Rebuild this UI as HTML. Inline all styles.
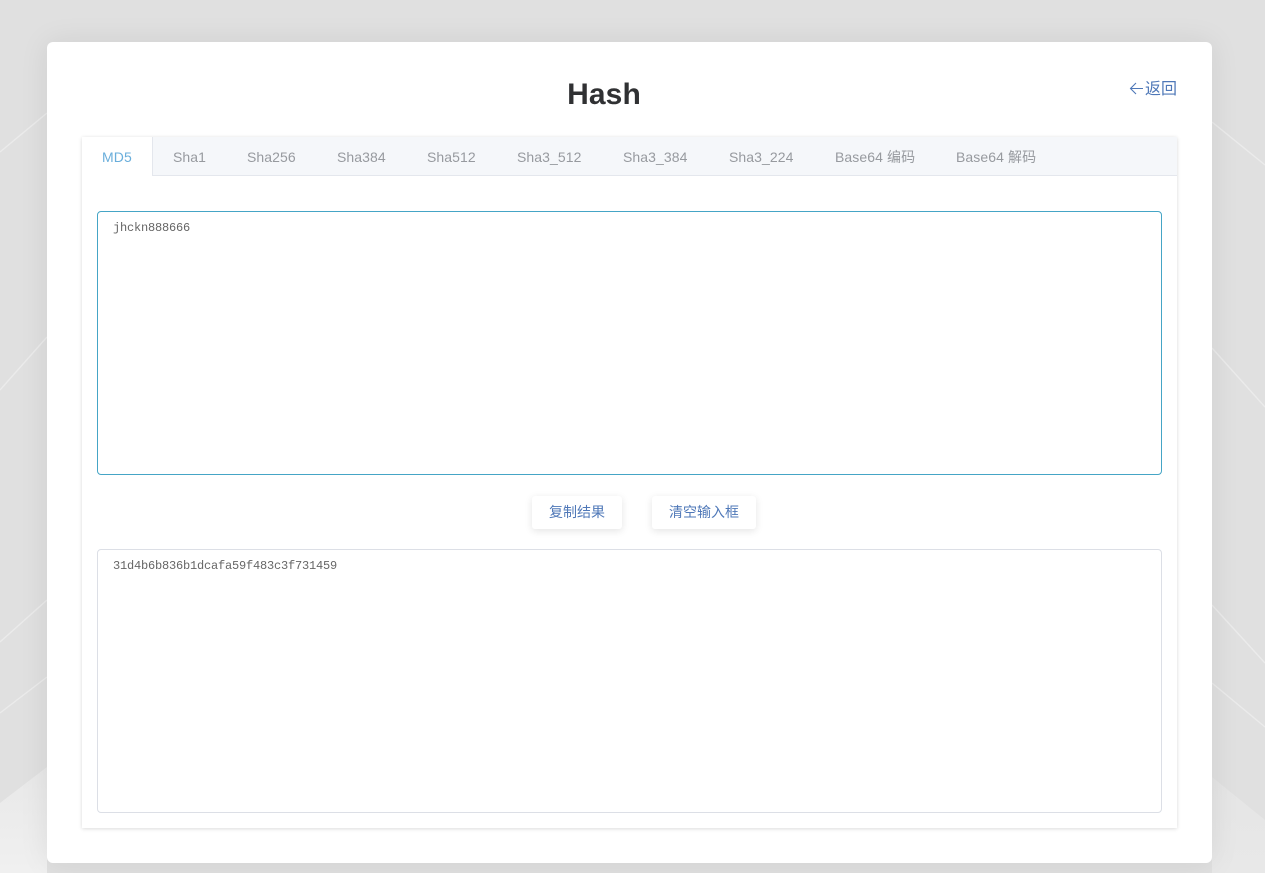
<!DOCTYPE html>
<html lang="zh">
<head>
<meta charset="utf-8">
<title>Hash</title>
<style>
html,body{margin:0;padding:0;width:1265px;height:873px;overflow:hidden;background:#e0e0e0;font-family:"Liberation Sans","Noto Sans CJK SC",sans-serif}
#bg{position:absolute;left:0;top:0}
.abs{position:absolute}
#card{left:47px;top:42px;width:1165px;height:821px;background:#fff;border-radius:6px;box-shadow:0 0 30px rgba(0,0,0,.08)}
h1{position:absolute;margin:0;left:504px;width:200px;top:78px;text-align:center;font-size:30px;letter-spacing:.1px;line-height:34px;font-weight:700;color:#303133}
#back{left:1129px;top:79px;width:48px;height:21px;color:#4f78b8;font-size:16px;line-height:21px}
#back span{position:absolute;left:16px;top:0;white-space:nowrap}
#back svg{position:absolute;left:0;top:2px}
#panel{left:82px;top:137px;width:1095px;height:691px;background:#fff;box-shadow:0 1px 4px rgba(0,0,0,.12),0 0 4px rgba(0,0,0,.04)}
#head{left:82px;top:137px;width:1095px;height:38px;background:#f5f7fa;border-bottom:1px solid #e4e7ed}
#active{left:82px;top:137px;width:70px;height:39px;background:#fff;border-right:1px solid #e4e7ed}
.tab{position:absolute;top:148px;font-size:14px;letter-spacing:.09px;line-height:18px;color:#979a9f;white-space:nowrap}
.box{position:absolute;left:97px;width:1063px;height:262px;border:1px solid #dcdfe6;border-radius:4px;background:#fff}
.box div{position:absolute;left:15px;top:7px;font-family:"Liberation Mono","Noto Sans CJK SC",monospace;font-size:12px;letter-spacing:-.2px;line-height:18px;color:#666;white-space:nowrap}
.btn{position:absolute;top:496px;height:33px;background:#fff;border-radius:3px;box-shadow:0 2px 8px rgba(0,0,0,.11);color:#4f78b8;font-size:14px;line-height:32px;text-align:center;white-space:nowrap}
</style>
</head>
<body>
<svg id="bg" width="1265" height="873" viewBox="0 0 1265 873" xmlns="http://www.w3.org/2000/svg">
  <defs>
    <linearGradient id="gl" x1="0" y1="0" x2="0" y2="1"><stop offset="0" stop-color="#e8e8e8"/><stop offset="1" stop-color="#f0f0f0"/></linearGradient>
    <linearGradient id="gr" x1="0" y1="0" x2="0" y2="1"><stop offset="0" stop-color="#e5e5e5"/><stop offset="1" stop-color="#e8e8e8"/></linearGradient>
  </defs>
  <rect width="1265" height="873" fill="#e0e0e0"/>
  <path d="M0 803 L47 767 L47 873 L0 873Z" fill="url(#gl)"/>
  <path d="M1212 777 L1265 820 L1265 873 L1212 873Z" fill="url(#gr)"/>
  <g fill="none" stroke="#ebebeb" stroke-width="1.4">
    <path d="M0 152 L47 113"/>
    <path d="M0 390 L47 337"/>
    <path d="M0 642 L47 600"/>
    <path d="M0 713 L47 677"/>
    <path d="M1212 122 L1265 165"/>
    <path d="M1212 348 L1265 407"/>
    <path d="M1212 605 L1265 663"/>
    <path d="M1212 683 L1265 727"/>
  </g>
</svg>
<div id="card" class="abs"></div>
<h1>Hash</h1>
<div id="back" class="abs">
  <svg width="15" height="15" viewBox="0 0 15 15" xmlns="http://www.w3.org/2000/svg"><path d="M14 7.5H1.5M7 2L1.5 7.5L7 13" fill="none" stroke="#4f78b8" stroke-width="1.1"/></svg>
  <span>返回</span>
</div>
<div id="panel" class="abs"></div>
<div id="head" class="abs"></div>
<div id="active" class="abs"></div>
<div class="tab" style="left:102px;color:#6aaedb">MD5</div>
<div class="tab" style="left:173px">Sha1</div>
<div class="tab" style="left:247px">Sha256</div>
<div class="tab" style="left:337px">Sha384</div>
<div class="tab" style="left:427px">Sha512</div>
<div class="tab" style="left:517px">Sha3_512</div>
<div class="tab" style="left:623px">Sha3_384</div>
<div class="tab" style="left:729px">Sha3_224</div>
<div class="tab" style="left:835px">Base64 编码</div>
<div class="tab" style="left:956px">Base64 解码</div>
<div class="box" style="top:211px;border-color:#45a5c6"><div>jhckn888666</div></div>
<div class="btn" style="left:532px;width:90px">复制结果</div>
<div class="btn" style="left:652px;width:104px">清空输入框</div>
<div class="box" style="top:549px"><div>31d4b6b836b1dcafa59f483c3f731459</div></div>
</body>
</html>
